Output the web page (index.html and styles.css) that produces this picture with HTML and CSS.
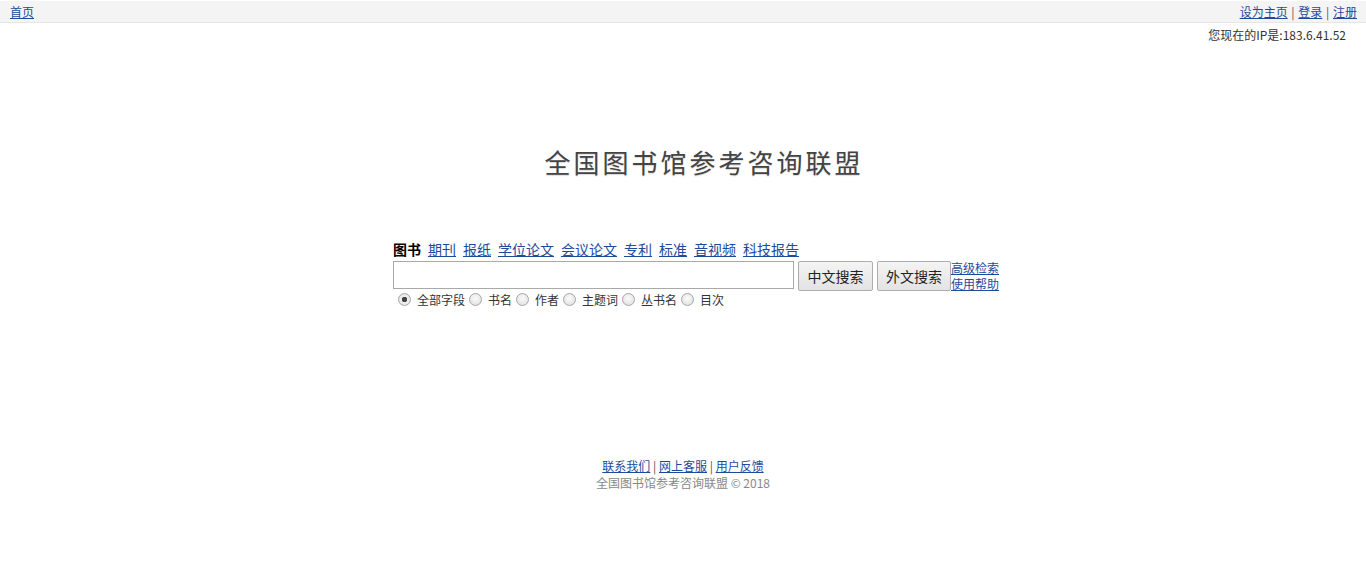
FILE: index.html
```html
<!DOCTYPE html>
<html lang="zh-CN">
<head>
<meta charset="utf-8">
<title>全国图书馆参考咨询联盟</title>
<link rel="stylesheet" href="styles.css">
</head>
<body>
<div class="topbar">
  <a href="#" class="lnk">首页</a>
  <div class="top-right">
    <a href="#" class="lnk">设为主页</a> <span class="sep">|</span> <a href="#" class="lnk">登录</a> <span class="sep">|</span> <a href="#" class="lnk">注册</a>
  </div>
</div>
<div class="ipline">您现在的IP是:183.6.41.52</div>

<h1 class="title">全国图书馆参考咨询联盟</h1>

<div class="search">
  <div class="tabs">
    <span class="tab-on">图书</span>
    <a href="#" class="lnk">期刊</a>
    <a href="#" class="lnk">报纸</a>
    <a href="#" class="lnk">学位论文</a>
    <a href="#" class="lnk">会议论文</a>
    <a href="#" class="lnk">专利</a>
    <a href="#" class="lnk">标准</a>
    <a href="#" class="lnk">音视频</a>
    <a href="#" class="lnk">科技报告</a>
  </div>
  <div class="row">
    <input type="text" class="kw">
    <button class="btn">中文搜索</button>
    <button class="btn">外文搜索</button>
    <div class="side-links">
      <a href="#" class="lnk">高级检索</a>
      <a href="#" class="lnk">使用帮助</a>
    </div>
  </div>
  <div class="radios">
    <label class="opt"><input type="radio" name="f" checked><span>全部字段</span></label>
    <label class="opt"><input type="radio" name="f"><span>书名</span></label>
    <label class="opt"><input type="radio" name="f"><span>作者</span></label>
    <label class="opt"><input type="radio" name="f"><span>主题词</span></label>
    <label class="opt"><input type="radio" name="f"><span>丛书名</span></label>
    <label class="opt"><input type="radio" name="f"><span>目次</span></label>
  </div>
</div>

<div class="footer">
  <div class="flinks"><a href="#" class="lnk">联系我们</a> <span class="sep">|</span> <a href="#" class="lnk">网上客服</a> <span class="sep">|</span> <a href="#" class="lnk">用户反馈</a></div>
  <div class="copy">全国图书馆参考咨询联盟 © 2018</div>
</div>
</body>
</html>
```
FILE: styles.css
```css
html, body {
  margin: 0;
  padding: 0;
  background: #fff;
}
body {
  font-family: "Noto Sans CJK SC", "Noto Sans", "Liberation Sans", sans-serif;
  font-size: 12px;
  color: #333;
}
.lnk {
  color: #1f4a9c;
  text-decoration: underline;
}
.sep {
  color: #555;
}
.top-right .sep {
  margin: 0 1px;
}
.topbar {
  height: 21px;
  background: #f4f4f4;
  border-bottom: 1px solid #e6e6e6;
  display: flex;
  justify-content: space-between;
  align-items: center;
  padding: 0 9px 0 10px;
  line-height: 16px;
  position: relative;
  top: 1px;
}
.top-right {
  white-space: nowrap;
}
.ipline {
  text-align: right;
  padding-right: 20px;
  margin-top: 5px;
  line-height: 16px;
  color: #333;
}
.title {
  margin: 104px 0 0 0;
  padding-left: 42px;
  text-align: center;
  font-size: 26px;
  font-weight: normal;
  line-height: 30px;
  letter-spacing: 3px;
  color: #444;
  text-shadow: 0 1px 1px rgba(0,0,0,0.15);
}
.search {
  width: 580px;
  margin: 62px auto 0 auto;
  white-space: nowrap;
}
.tabs {
  display: flex;
  gap: 7px;
  font-size: 14px;
  line-height: 20px;
}
.tab-on {
  font-weight: bold;
  color: #000;
}
.row {
  display: flex;
  align-items: center;
  margin-top: 2px;
  height: 30px;
}
.row > * {
  flex-shrink: 0;
}
.kw {
  box-sizing: border-box;
  width: 401px;
  height: 28px;
  border: 1px solid #a9a9a9;
  margin: 0;
  padding: 0 4px;
  font-size: 14px;
  align-self: flex-start;
}
.btn {
  box-sizing: border-box;
  width: 75px;
  height: 30px;
  margin-left: 4px;
  padding: 0;
  font-family: inherit;
  font-size: 14px;
  color: #222;
  background: linear-gradient(#f4f4f4, #e3e3e3);
  border: 1px solid #adadad;
  border-radius: 2px;
}
.btn + .btn {
  width: 74px;
}
.side-links {
  display: flex;
  flex-direction: column;
  line-height: 16px;
  font-size: 12px;
}
.radios {
  display: flex;
  align-items: center;
  height: 16px;
  margin-top: 0;
  padding-left: 5px;
  gap: 4px;
  color: #333;
}
.opt {
  display: flex;
  align-items: center;
  gap: 6px;
}
.opt span {
  line-height: 16px;
  position: relative;
  top: 1px;
}
.opt input {
  -webkit-appearance: none;
  appearance: none;
  width: 13px;
  height: 13px;
  margin: 0;
  box-sizing: border-box;
  border: 1px solid #a6a6a6;
  border-radius: 50%;
  background: radial-gradient(circle at 50% 40%, #fbfbfb 0%, #dcdcdc 100%);
}
.opt input:checked {
  background: radial-gradient(circle, #444 0 2.5px, #f1f1f1 3px, #dcdcdc 100%);
}
.footer {
  margin-top: 150px;
  text-align: center;
  line-height: 17px;
}
.copy {
  color: #888;
}
```
